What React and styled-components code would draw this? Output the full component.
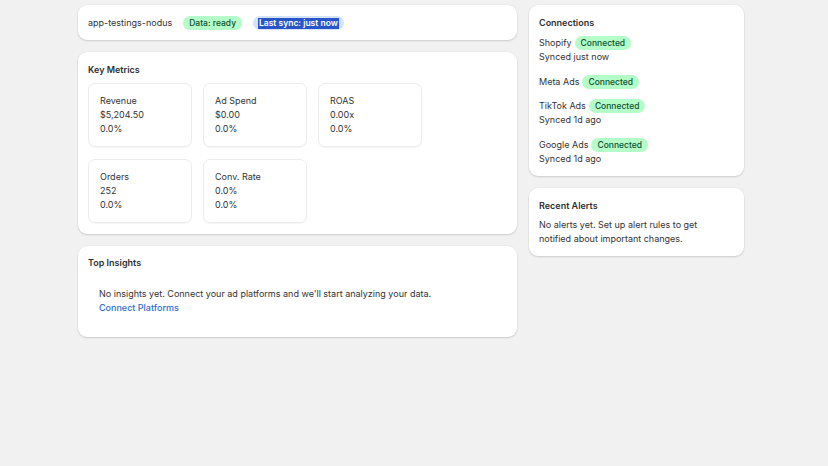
import React from 'react';
import styled, { createGlobalStyle } from 'styled-components';

const Global = createGlobalStyle`
    html, body {
        margin: 0;
        background: #f1f1f1;
    }
    body {
        font-family: Inter, "Noto Sans", sans-serif;
        font-size: 9px;
        line-height: 14px;
        color: #333333;
    }
`;

const Page = styled.div`
    display: grid;
    grid-template-columns: 439px 215px;
    gap: 12px;
    align-items: start;
    padding: 5px 0 0 78px;
    min-height: 461px;
`;

const Column = styled.div`
    display: flex;
    flex-direction: column;
    gap: 12px;
`;

const Card = styled.section`
    background: #fff;
    border-radius: 9px;
    box-shadow: 0 1px 2px rgba(0, 0, 0, 0.14), 0 0 0 0.5px rgba(0, 0, 0, 0.04);
    padding: ${p => p.pt || 10}px 10px ${p => p.pb || 10}px 10px;
    display: flex;
    flex-direction: column;
    gap: ${p => p.gap || 6}px;
`;

const HeaderRow = styled.div`
    display: flex;
    align-items: center;
    gap: 11px;
`;

const Title = styled.h2`
    margin: 0;
    font-size: 9px;
    line-height: 14px;
    font-weight: 600;
    color: #303030;
`;

const Badge = styled.span`
    display: inline-flex;
    align-items: center;
    height: 14px;
    border-radius: 7px;
    font-size: 8.5px;
    font-weight: 500;
    background: ${p => (p.tone === 'info' ? '#d3e3fa' : '#b4fcc8')};
    color: ${p => (p.tone === 'info' ? '#00527c' : '#0c5132')};
    padding: ${p => (p.tone === 'info' ? '0 5px' : '0 6px')};
`;

const Selected = styled.span`
    background: #2856c8;
    color: #fff;
    font-weight: 600;
    line-height: 11px;
    padding: 0 1px;
`;

const MetricGrid = styled.div`
    display: grid;
    grid-template-columns: repeat(3, 104px);
    column-gap: 11px;
    row-gap: 12px;
`;

const Metric = styled.div`
    border: 1px solid #ececec;
    border-radius: 7px;
    padding: 10px 11px;
    height: 64px;
    box-sizing: border-box;
    box-shadow: 0 1px 1px rgba(0, 0, 0, 0.04);
`;

const Line = styled.div`
    line-height: 14px;
    white-space: nowrap;
`;

const Empty = styled.div`
    padding: 11px 11px 10px;
    line-height: 13.5px;
`;

const Link = styled.a`
    color: #2c6ecb;
    text-decoration: none;
    font-weight: 500;
`;

const ConnList = styled.div`
    display: flex;
    flex-direction: column;
    gap: 10.67px;
`;

const Conn = styled.div`
    display: flex;
    flex-direction: column;
`;

const ConnName = styled.div`
    display: flex;
    align-items: center;
    gap: 3px;
    line-height: 14px;
`;

const Body = styled.p`
    margin: 0;
    padding-right: 8px;
    line-height: 14px;
`;

const metrics = [
    { label: 'Revenue', value: '$5,204.50', change: '0.0%' },
    { label: 'Ad Spend', value: '$0.00', change: '0.0%' },
    { label: 'ROAS', value: '0.00x', change: '0.0%' },
    { label: 'Orders', value: '252', change: '0.0%' },
    { label: 'Conv. Rate', value: '0.0%', change: '0.0%' },
];

const connections = [
    { name: 'Shopify', synced: 'Synced just now' },
    { name: 'Meta Ads' },
    { name: 'TikTok Ads', synced: 'Synced 1d ago' },
    { name: 'Google Ads', synced: 'Synced 1d ago' },
];

const App = () => (
    <>
        <Global />
        <Page>
            <Column>
                <Card pt={11} pb={10}>
                    <HeaderRow>
                        <span>app-testings-nodus</span>
                        <Badge>Data: ready</Badge>
                        <Badge tone="info">
                            <Selected>Last sync: just now</Selected>
                        </Badge>
                    </HeaderRow>
                </Card>
                <Card pt={11} pb={11}>
                    <Title>Key Metrics</Title>
                    <MetricGrid>
                        {metrics.map(m => (
                            <Metric key={m.label}>
                                <Line>{m.label}</Line>
                                <Line>{m.value}</Line>
                                <Line>{m.change}</Line>
                            </Metric>
                        ))}
                    </MetricGrid>
                </Card>
                <Card pt={10} pb={13}>
                    <Title>Top Insights</Title>
                    <Empty>
                        <div>No insights yet. Connect your ad platforms and we'll start analyzing your data.</div>
                        <Link href="#">Connect Platforms</Link>
                    </Empty>
                </Card>
            </Column>
            <Column>
                <Card pt={11} pb={10}>
                    <Title>Connections</Title>
                    <ConnList>
                        {connections.map(c => (
                            <Conn key={c.name}>
                                <ConnName>
                                    {c.name}
                                    <Badge>Connected</Badge>
                                </ConnName>
                                {c.synced && <Line>{c.synced}</Line>}
                            </Conn>
                        ))}
                    </ConnList>
                </Card>
                <Card pt={11} pb={10} gap={5}>
                    <Title>Recent Alerts</Title>
                    <Body>No alerts yet. Set up alert rules to get notified about important changes.</Body>
                </Card>
            </Column>
        </Page>
    </>
);

export default App;
